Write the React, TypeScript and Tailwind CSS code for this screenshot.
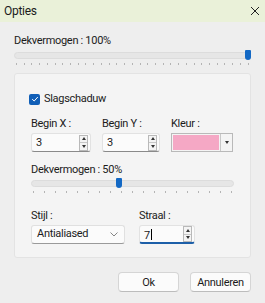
import { useState } from "react";

function Slider({ value, ticks }: { value: number; ticks: number }) {
  return (
    <div className="relative">
      <div className="h-[7px] rounded-sm border border-[#dcdcdc] bg-[#e6e6e6]" />
      <div
        className="absolute top-[-2px] h-[10px] w-[6px] -translate-x-1/2 rounded-b-[3px] rounded-t-[1px] bg-[#1368c4]"
        style={{ left: `calc(${value}% - ${value === 100 ? 3 : 0}px)` }}
      />
      <div className="mt-[4px] flex justify-between px-[2px]">
        {Array.from({ length: ticks }).map((_, i) => (
          <span key={i} className="h-[2px] w-px bg-[#b4b4b4]" />
        ))}
      </div>
    </div>
  );
}

function Spin() {
  return (
    <div className="flex h-[16px] w-[9px] flex-col border border-[#b9b9b9] bg-[#f4f4f4]">
      <div className="flex flex-1 items-center justify-center border-b border-[#c8c8c8]">
        <span className="h-0 w-0 border-x-[2.5px] border-b-[3px] border-x-transparent border-b-[#333]" />
      </div>
      <div className="flex flex-1 items-center justify-center">
        <span className="h-0 w-0 border-x-[2.5px] border-t-[3px] border-x-transparent border-t-[#333]" />
      </div>
    </div>
  );
}

function NumberField({
  value,
  width,
  active = false,
}: {
  value: string;
  width: string;
  active?: boolean;
}) {
  return (
    <div
      className={`flex h-[19px] items-center justify-between rounded-[3px] border border-[#e2e2e2] bg-[#fbfbfb] pl-[4px] pr-[2px] ${width} ${
        active ? "border-b-2 border-b-[#1d5fa8]" : "border-b-[#8a8a8a]"
      }`}
    >
      <span className="leading-none">
        {value}
        {active && <span className="ml-px inline-block h-[11px] w-px translate-y-[1px] bg-black" />}
      </span>
      <Spin />
    </div>
  );
}

export default function App() {
  const [shadow] = useState(true);

  return (
    <div className="flex h-[303px] w-[265px] flex-col overflow-hidden bg-[#eeeeee] text-[11px] tracking-[-0.3px] text-[#1b1b1b] [font-family:Roboto,'Noto_Sans',sans-serif]">
      <div className="flex h-[22px] shrink-0 items-center justify-between bg-[#eaf1d9] pl-[4px] pr-[4px]">
        <span className="text-[12px]">Opties</span>
        <svg width="10" height="10" viewBox="0 0 10 10" className="mr-[1px]">
          <path d="M1 1 L9 9 M9 1 L1 9" stroke="#222" strokeWidth="1" />
        </svg>
      </div>

      <div className="flex flex-1 flex-col px-[14px] pt-[11px]">
        <div className="leading-[16px]">Dekvermogen : 100%</div>
        <div className="mt-[3px]">
          <Slider value={100} ticks={31} />
        </div>

        <div className="mt-[8px] flex h-[185px] flex-col rounded-[3px] border border-[#e3e3e3] bg-[#f4f4f4] px-[16px] pt-[17px]">
          <label className="-ml-[2px] flex items-center gap-[4px]">
            <span className="flex h-[11px] w-[11px] items-center justify-center rounded-[2px] bg-[#115fb7]">
              {shadow && (
                <svg width="8" height="8" viewBox="0 0 8 8">
                  <path d="M1.2 4.2 L3.2 6 L6.8 2" stroke="#fff" strokeWidth="1" fill="none" />
                </svg>
              )}
            </span>
            <span className="leading-[16px]">Slagschaduw</span>
          </label>

          <div className="mt-[9px] flex gap-[11px]">
            <div className="flex flex-col gap-[1px]">
              <span className="leading-[16px]">Begin X :</span>
              <NumberField value="3" width="w-[60px]" />
            </div>
            <div className="flex flex-col gap-[1px]">
              <span className="leading-[16px]">Begin Y :</span>
              <NumberField value="3" width="w-[58px]" />
            </div>
            <div className="flex flex-col gap-[1px]">
              <span className="leading-[16px]">Kleur :</span>
              <div className="flex h-[19px] w-[62px] border border-[#b9b9b9] bg-[#f4f4f4]">
                <div className="m-px flex-1 bg-[#f5a8c5]" />
                <div className="flex w-[12px] items-center justify-center border-l border-[#c8c8c8]">
                  <span className="h-0 w-0 border-x-[2.5px] border-t-[3px] border-x-transparent border-t-[#333]" />
                </div>
              </div>
            </div>
          </div>

          <div className="mt-[10px] leading-[16px]">Dekvermogen : 50%</div>
          <div className="mt-[2px] w-[203px]">
            <Slider value={43.5} ticks={19} />
          </div>

          <div className="mt-[15px] flex gap-[14px]">
            <div className="flex flex-col gap-[1px]">
              <span className="leading-[16px]">Stijl :</span>
              <div className="flex h-[19px] w-[94px] items-center justify-between rounded-[3px] border border-[#e0e0e0] border-b-[#9a9a9a] bg-[#fbfbfb] pl-[5px] pr-[6px]">
                <span>Antialiased</span>
                <svg width="8" height="5" viewBox="0 0 8 5">
                  <path d="M0.5 0.5 L4 4 L7.5 0.5" stroke="#777" strokeWidth="0.9" fill="none" />
                </svg>
              </div>
            </div>
            <div className="flex flex-col gap-[1px]">
              <span className="leading-[16px]">Straal :</span>
              <NumberField value="7" width="w-[56px]" active />
            </div>
          </div>
        </div>

        <div className="mt-[14px] flex justify-end gap-[11px]">
          <button
            type="button"
            className="h-[20px] w-[61px] rounded-[4px] border border-[#d5d5d5] border-b-[#bcbcbc] bg-[#fbfbfb] leading-none"
          >
            Ok
          </button>
          <button
            type="button"
            className="h-[20px] w-[61px] rounded-[4px] border border-[#d5d5d5] border-b-[#bcbcbc] bg-[#fbfbfb] leading-none"
          >
            Annuleren
          </button>
        </div>
      </div>
    </div>
  );
}
